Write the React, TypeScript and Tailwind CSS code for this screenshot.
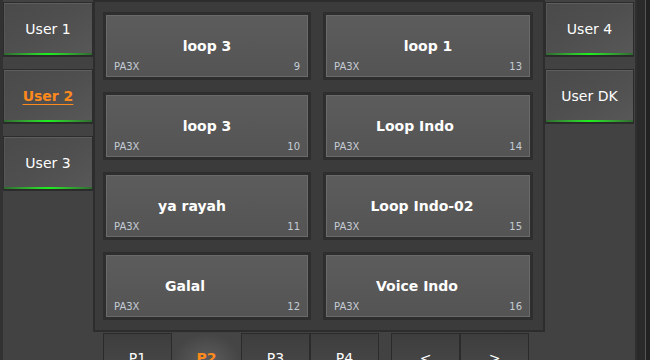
const font = { fontFamily: '"DejaVu Sans", Verdana, sans-serif' };

const cards = [
  { title: 'loop 3', num: 9, pad: 'pr-0' },
  { title: 'loop 1', num: 13, pad: 'pr-0' },
  { title: 'loop 3', num: 10, pad: 'pr-0' },
  { title: 'Loop Indo', num: 14, pad: 'pr-[26px]' },
  { title: 'ya rayah', num: 11, pad: 'pr-[30px]' },
  { title: 'Loop Indo-02', num: 15, pad: 'pr-[12px]' },
  { title: 'Galal', num: 12, pad: 'pr-[44px]' },
  { title: 'Voice Indo', num: 16, pad: 'pr-[22px]' }
];

const tabs = [
  { label: 'P1', active: false },
  { label: 'P2', active: true },
  { label: 'P3', active: false },
  { label: 'P4', active: false }
];

function UserButton({ label, active = false }: { label: string; active?: boolean }) {
  return (
    <div className="flex h-[55px] shrink-0 flex-col border border-[#2c2c2c] bg-gradient-to-br from-[#4a4a4a] via-[#4f4f4f] to-[#585858] shadow-[inset_0_1px_0_#5e5e5e,inset_1px_0_0_#565656]">
      <div
        className={`flex flex-1 items-center justify-center pt-[2px] text-[14px] ${
          active ? 'font-bold text-[#ff8a1c] underline underline-offset-[3px]' : 'text-white'
        }`}
      >
        {label}
      </div>
      <div className="h-[2px] bg-gradient-to-r from-[#2f6a2f] via-[#19f019] to-[#2f6a2f]" />
      <div className="h-[1px] bg-[#2a2a2a]" />
    </div>
  );
}

function Card({ title, num, pad }: { title: string; num: number; pad: string }) {
  return (
    <div className="h-[68px] border-[3px] border-[#2e2e2e]">
      <div className="flex h-full flex-col border border-[#6a6a6a] bg-gradient-to-b from-[#5c5c5c] to-[#545454]">
        <div className={`flex flex-1 items-center justify-center pt-[15px] text-[14px] font-bold text-white ${pad}`}>
          {title}
        </div>
        <div className="mb-[3px] flex h-[12px] items-center justify-between px-[7px] text-[10px] leading-[12px] text-[#c4ccd6]">
          <span>PA3X</span>
          <span>{num}</span>
        </div>
      </div>
    </div>
  );
}

function Tab({ label, active }: { label: string; active?: boolean }) {
  return (
    <div
      className={`flex h-[50px] w-[69px] shrink-0 items-center justify-center text-[14px] ${
        active
          ? 'bg-[radial-gradient(ellipse_at_50%_60%,#5e5e5e,#454545_70%)] font-bold text-[#ff8a1c]'
          : 'border border-[#2b2b2b] bg-gradient-to-b from-[#3e3e3e] to-[#4a4a4a] text-white'
      }`}
    >
      {label}
    </div>
  );
}

export default function App() {
  return (
    <div className="flex h-[360px] w-[650px] overflow-hidden bg-[#424242]" style={font}>
      <div className="flex w-[93px] shrink-0 flex-col gap-[12px] border-l-[3px] border-[#323232] pt-[2px]">
        <UserButton label="User 1" />
        <UserButton label="User 2" active />
        <UserButton label="User 3" />
      </div>

      <div className="flex w-[452px] shrink-0 flex-col">
        <div className="grid h-[332px] shrink-0 grid-cols-[208px_210px] content-start gap-x-[12px] gap-y-[12px] border-2 border-[#2d2d2d] bg-[#3b3b3b] pl-[8px] pt-[10px]">
          {cards.map((c) => (
            <Card key={c.num} title={c.title} num={c.num} pad={c.pad} />
          ))}
        </div>
        <div className="ml-[10px] mt-[1px] flex shrink-0">
          {tabs.map((t) => (
            <Tab key={t.label} label={t.label} active={t.active} />
          ))}
          <div className="w-[12px]" />
          <Tab label="<" />
          <Tab label=">" />
        </div>
      </div>

      <div className="flex w-[92px] shrink-0 flex-col gap-[12px] border-r-2 border-[#2f2f2f] pr-[1px] pt-[2px]">
        <UserButton label="User 4" />
        <UserButton label="User DK" />
      </div>

      <div className="flex flex-1 bg-[#2a2a2a] pl-[8px]">
        <div className="w-[1px] bg-[#555555]" />
        <div className="flex-1 bg-[#222222]" />
      </div>
    </div>
  );
}
